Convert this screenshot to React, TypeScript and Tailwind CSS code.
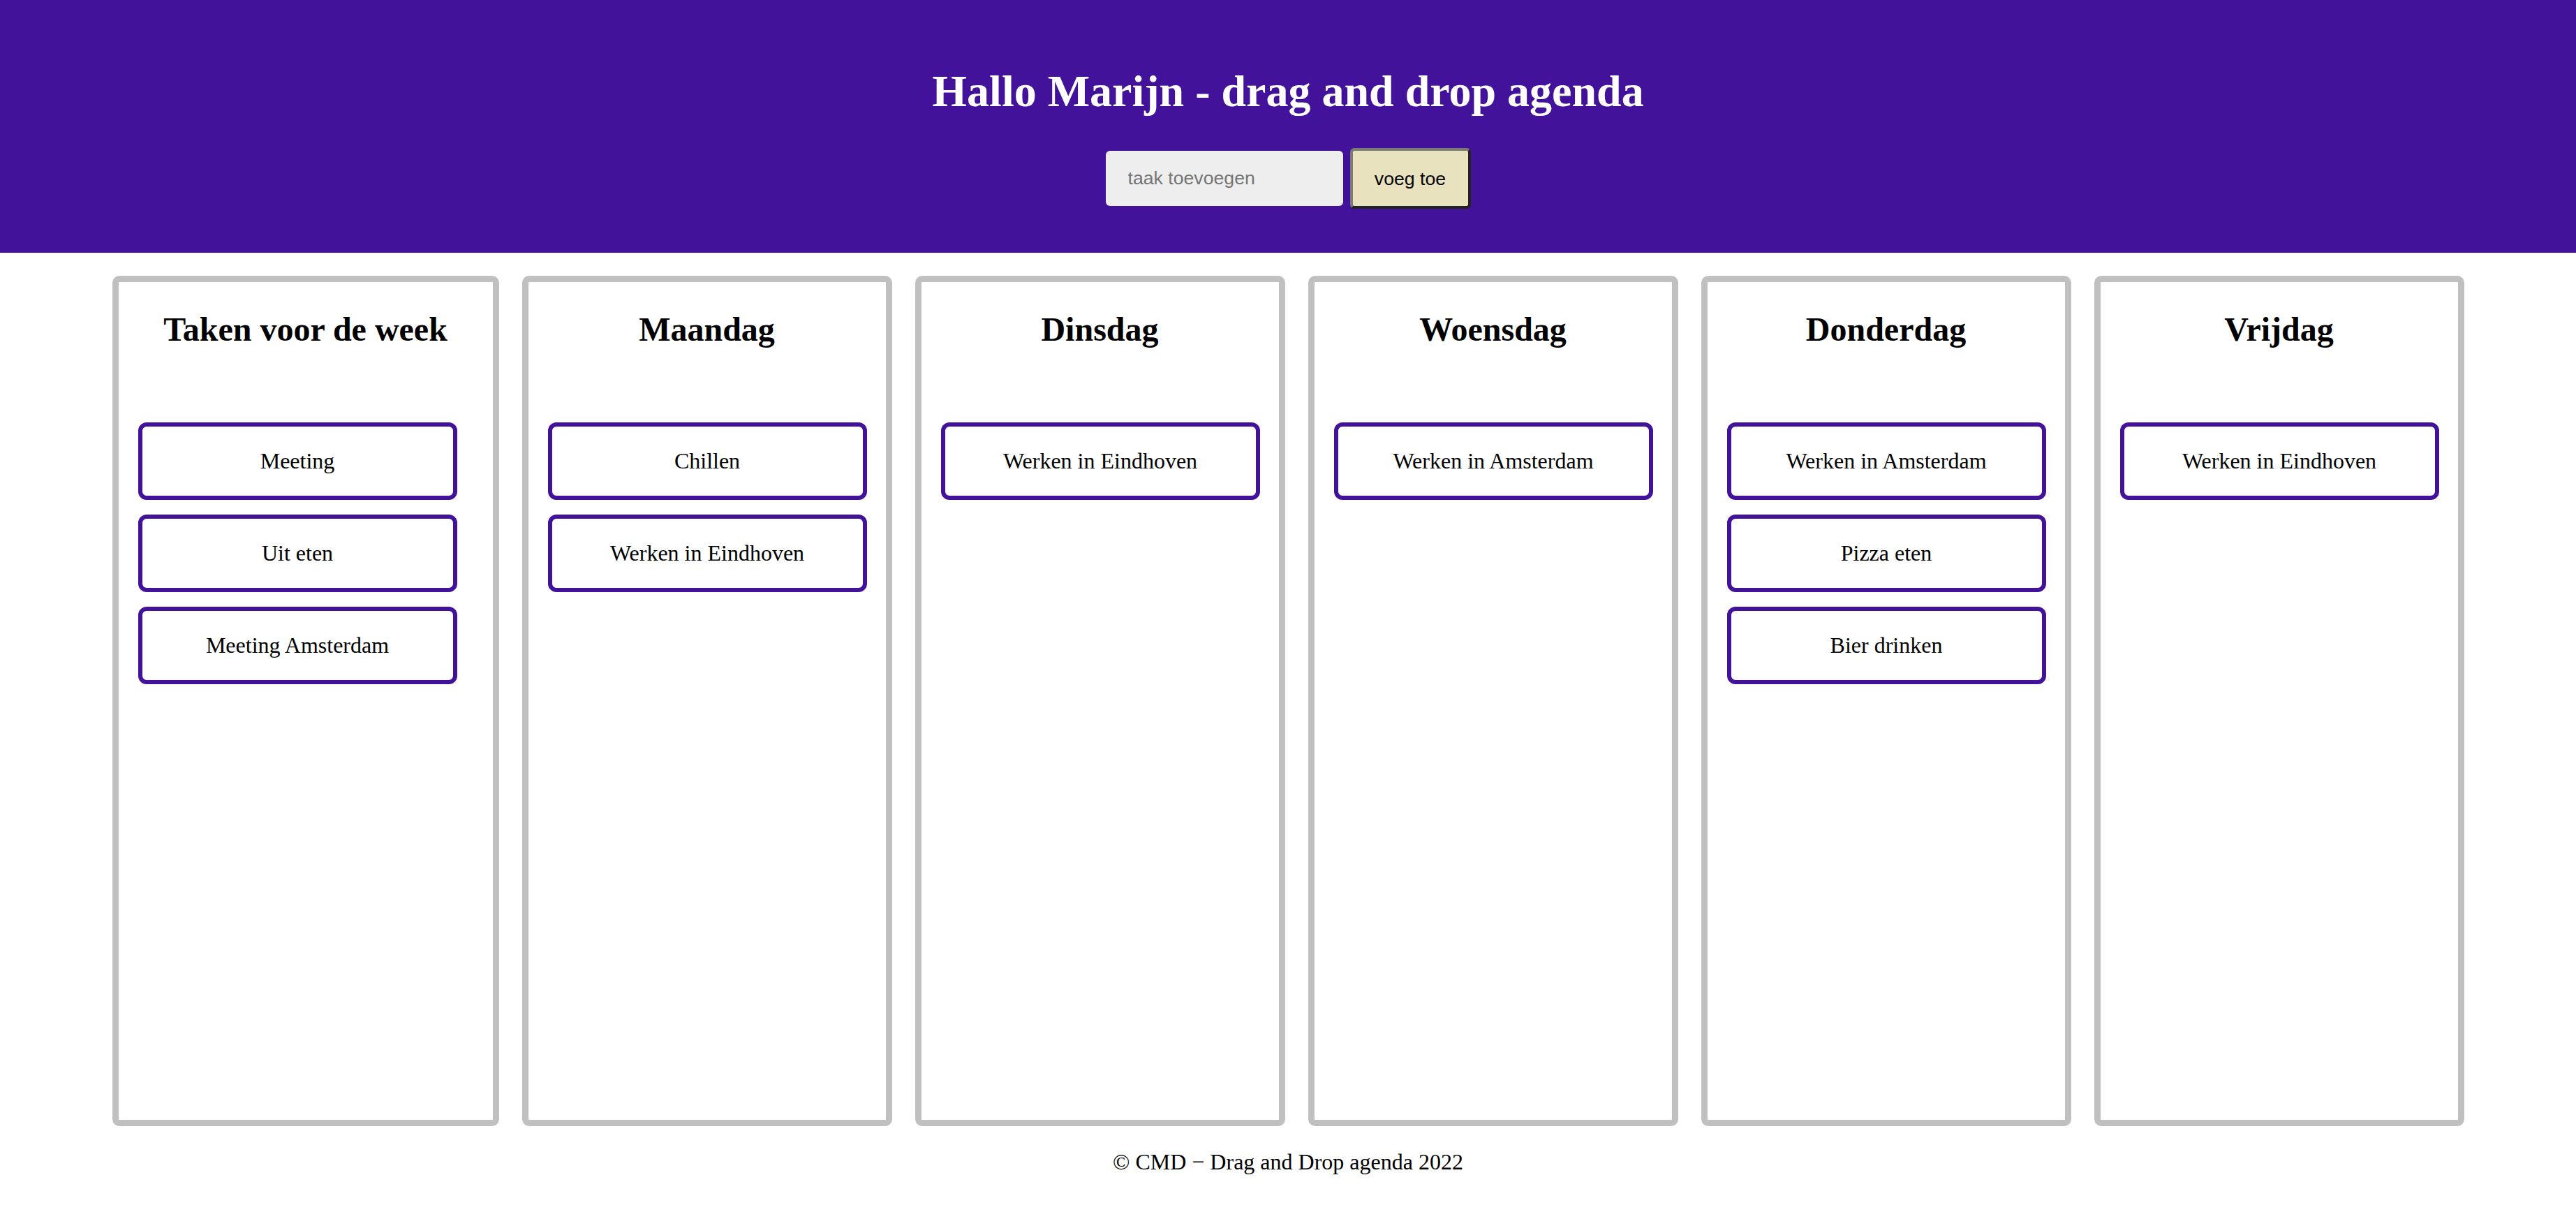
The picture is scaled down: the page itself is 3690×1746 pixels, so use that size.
const columns = [
  { title: "Taken voor de week", wide: true, tasks: ["Meeting", "Uit eten", "Meeting Amsterdam"] },
  { title: "Maandag", tasks: ["Chillen", "Werken in Eindhoven"] },
  { title: "Dinsdag", tasks: ["Werken in Eindhoven"] },
  { title: "Woensdag", tasks: ["Werken in Amsterdam"] },
  { title: "Donderdag", tasks: ["Werken in Amsterdam", "Pizza eten", "Bier drinken"] },
  { title: "Vrijdag", tasks: ["Werken in Eindhoven"] },
];

const serif = { fontFamily: '"Liberation Serif", "Times New Roman", serif' };

function Column({ title, tasks, wide }: { title: string; tasks: string[]; wide?: boolean }) {
  return (
    <section
      className={`${wide ? "w-[554px]" : "w-[530px]"} h-[1218px] shrink-0 border-[9px] border-[#c0c0c0] rounded-[10px] bg-white px-[28px] pt-[41px]`}
    >
      <h2 className="text-center text-[48px] leading-[53px] font-bold text-black">{title}</h2>
      <ul className="mt-[107px] flex flex-col gap-[21px]">
        {tasks.map((t) => (
          <li
            key={t}
            className="w-[457px] h-[111px] border-[6px] border-[#43129b] rounded-[12px] bg-white flex items-center justify-center text-[32px] leading-[35px] text-black cursor-grab"
          >
            {t}
          </li>
        ))}
      </ul>
    </section>
  );
}

export default function App() {
  return (
    <div className="min-h-screen bg-white" style={serif}>
      <header className="h-[362px] bg-[#43129b] pt-[95px] flex flex-col items-center">
        <h1 className="text-[64px] leading-[71px] font-bold text-white">Hallo Marijn - drag and drop agenda</h1>
        <form
          className="mt-[46px] flex items-center gap-[10px]"
          style={{ fontFamily: '"Liberation Sans", Arial, sans-serif' }}
          onSubmit={(e) => e.preventDefault()}
        >
          <input
            type="text"
            placeholder="taak toevoegen"
            className="w-[340px] h-[79px] rounded-[6px] bg-[#eeeeee] px-[32px] text-[26.67px] text-black placeholder:text-[#757575] outline-none"
          />
          <button
            type="submit"
            className="w-[173px] h-[87px] rounded-[6px] bg-[#e9e2bf] border-[4px] border-t-[#7b7b73] border-l-[#7b7b73] border-b-[#232323] border-r-[#232323] text-[26.67px] text-black"
          >
            voeg toe
          </button>
        </form>
      </header>

      <main className="mt-[33px] flex justify-center gap-[33px]">
        {columns.map((c) => (
          <Column key={c.title} {...c} />
        ))}
      </main>

      <footer className="mt-[34px] text-center text-[32px] leading-[35px] text-black">
        © CMD − Drag and Drop agenda 2022
      </footer>
    </div>
  );
}
